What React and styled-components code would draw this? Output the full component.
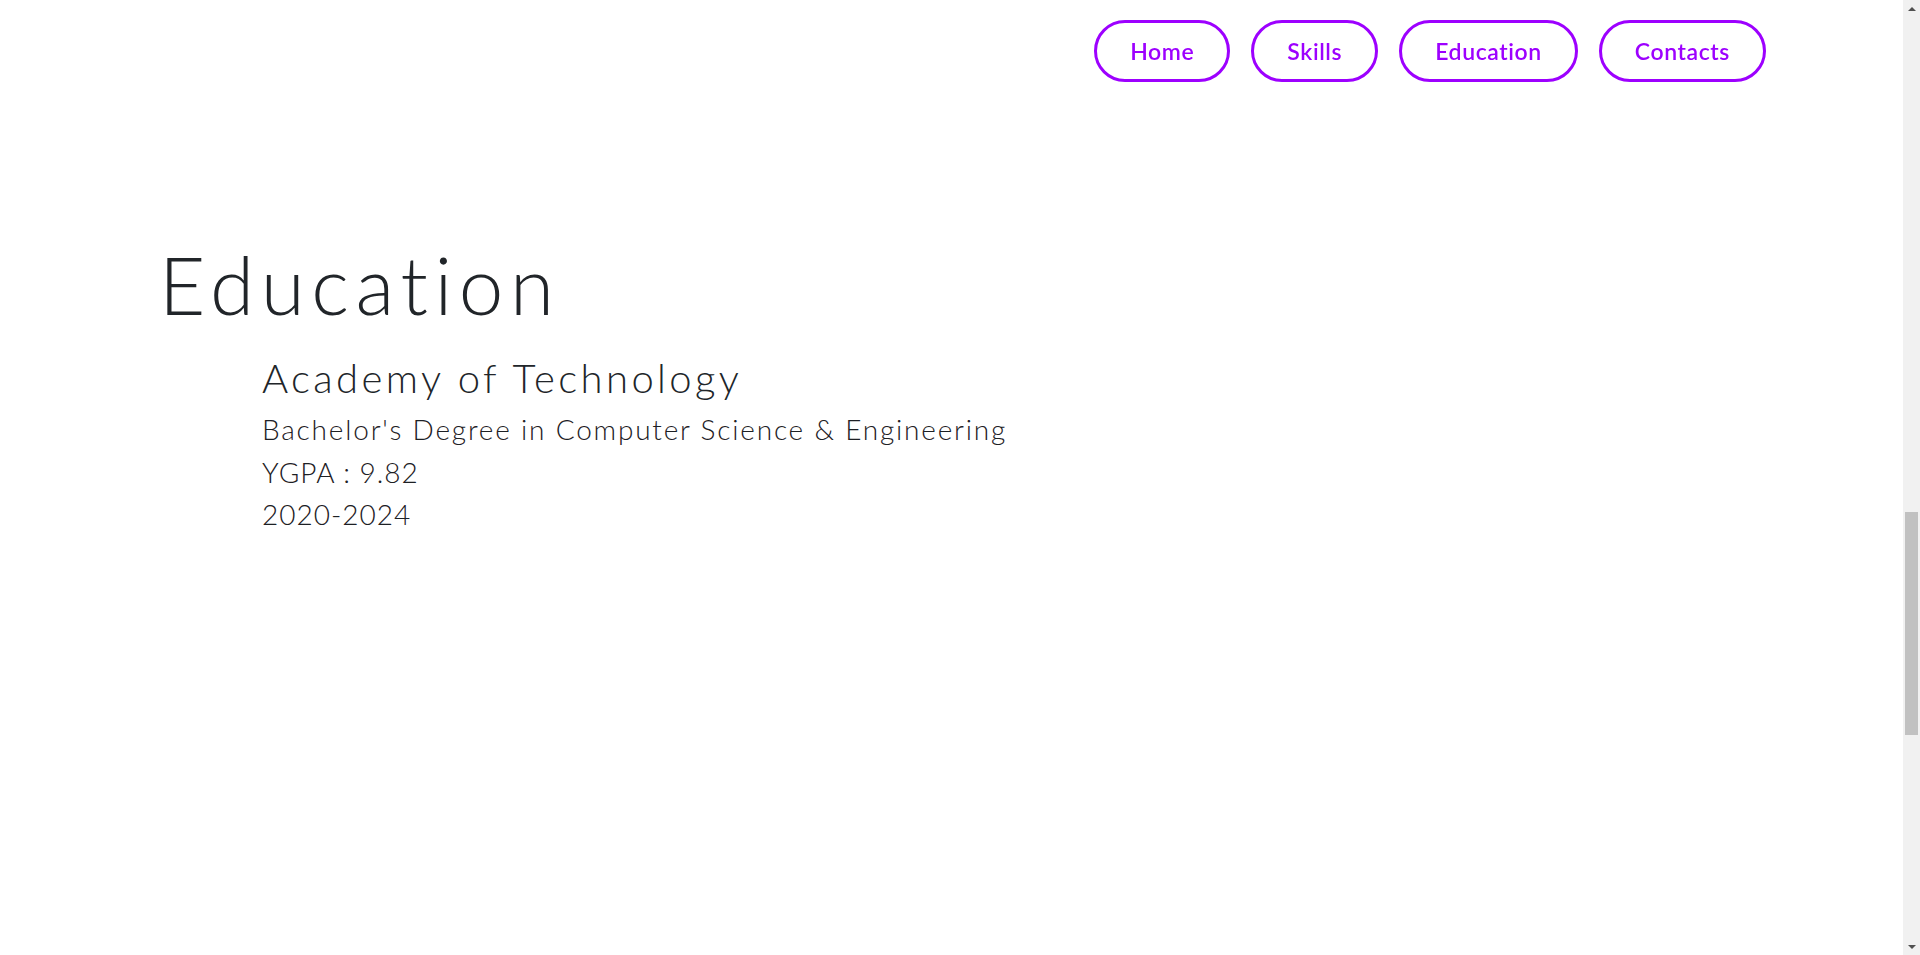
import React, { useLayoutEffect, useRef, useState } from 'react';
import styled, { createGlobalStyle } from 'styled-components';

const GlobalStyle = createGlobalStyle`
  html, body {
    margin: 0;
    height: 100%;
    overflow: hidden;
  }
  body {
    background: #fff;
    color: #212529;
    font-family: 'Lato', 'Open Sans', sans-serif;
  }
  * {
    box-sizing: border-box;
  }
`

const Page = styled.div`
  display: flex;
  height: 100vh;
`

const Viewport = styled.main`
  flex: 1;
  height: 100%;
  overflow-y: scroll;
  scrollbar-width: none;

  &::-webkit-scrollbar {
    display: none;
  }
`

const ScrollBar = styled.div`
  width: 17px;
  height: 100%;
  display: flex;
  flex-direction: column;
  background: #f1f1f1;
`

const ArrowButton = styled.button`
  flex: 0 0 17px;
  display: flex;
  align-items: center;
  justify-content: center;
  padding: 0;
  border: none;
  background: #f1f1f1;
  cursor: pointer;

  &::after {
    content: '';
    border-left: 4px solid transparent;
    border-right: 4px solid transparent;
    border-${props => props.down ? 'top' : 'bottom'}: 4px solid #505050;
  }
`

const Track = styled.div`
  flex: 1;
  position: relative;
`

const Thumb = styled.div`
  position: absolute;
  left: 2px;
  right: 2px;
  background: #c1c1c1;
`

const Nav = styled.nav`
  position: fixed;
  top: 0;
  left: 0;
  right: 17px;
  z-index: 10;
  display: flex;
  justify-content: flex-end;
  gap: 21px;
  padding: 20px 137px 0 0;
`

const NavButton = styled.a`
  display: flex;
  align-items: center;
  justify-content: center;
  height: 62px;
  padding: 0 33px;
  border: 3px solid #9d00ff;
  border-radius: 31px;
  background: #fff;
  color: #9d00ff;
  font-family: 'Lato', sans-serif;
  font-weight: 600;
  font-size: 23px;
  letter-spacing: 0.6px;
  text-decoration: none;
  cursor: pointer;
`

const Section = styled.section`
  min-height: ${props => props.height}px;
`

const EducationSection = styled.section`
  min-height: 955px;
  padding: 236px 0 0 159px;
`

const Title = styled.h1`
  margin: 0 0 22px;
  font-family: 'Lato', sans-serif;
  font-weight: 300;
  font-size: 80px;
  line-height: 1.2;
  letter-spacing: 6.6px;
  font-variant-ligatures: none;
  color: #212529;
`

const Item = styled.div`
  padding-left: 103px;
  display: flex;
  flex-direction: column;
`

const School = styled.h2`
  margin: 0 0 6px;
  font-family: 'Lato', sans-serif;
  font-weight: 300;
  font-size: 40px;
  line-height: 1.2;
  letter-spacing: 3.4px;
`

const Line = styled.p`
  margin: 0;
  font-family: 'Lato', sans-serif;
  font-weight: 300;
  font-size: 28px;
  line-height: 42.5px;
  letter-spacing: ${props => props.tight ? '1px' : '1.8px'};
  color: #1d2024;
`

const links = ['Home', 'Skills', 'Education', 'Contacts'];

const App = () => {
  const viewportRef = useRef(null);
  const trackRef = useRef(null);
  const educationRef = useRef(null);
  const [thumb, setThumb] = useState({ top: 0, height: 0 });

  const updateThumb = () => {
    const view = viewportRef.current;
    const track = trackRef.current;
    if (!view || !track) return;
    const trackHeight = track.clientHeight;
    const height = Math.max(20, trackHeight * view.clientHeight / view.scrollHeight);
    const max = view.scrollHeight - view.clientHeight;
    const top = max > 0 ? (trackHeight - height) * view.scrollTop / max : 0;
    setThumb({ top, height });
  };

  useLayoutEffect(() => {
    if (viewportRef.current && educationRef.current) {
      viewportRef.current.scrollTop = educationRef.current.offsetTop;
    }
    updateThumb();
  }, []);

  const scrollBy = (amount) => {
    viewportRef.current && viewportRef.current.scrollBy(0, amount);
  };

  return (
    <Page>
      <GlobalStyle />
      <Viewport ref={viewportRef} onScroll={updateThumb}>
        <Nav>
          {links.map(link => (
            <NavButton key={link} href={`#${link.toLowerCase()}`}>{link}</NavButton>
          ))}
        </Nav>
        <Section id="home" height={955} />
        <Section id="skills" height={1165} />
        <EducationSection id="education" ref={educationRef}>
          <Title>Education</Title>
          <Item>
            <School>Academy of Technology</School>
            <Line>Bachelor's Degree in Computer Science &amp; Engineering</Line>
            <Line tight>YGPA : 9.82</Line>
            <Line tight>2020-2024</Line>
          </Item>
        </EducationSection>
        <Section id="contacts" height={869} />
      </Viewport>
      <ScrollBar>
        <ArrowButton aria-label="Scroll up" onClick={() => scrollBy(-40)} />
        <Track ref={trackRef}>
          <Thumb style={{ top: thumb.top, height: thumb.height }} />
        </Track>
        <ArrowButton down aria-label="Scroll down" onClick={() => scrollBy(40)} />
      </ScrollBar>
    </Page>
  );
}

export default App;
